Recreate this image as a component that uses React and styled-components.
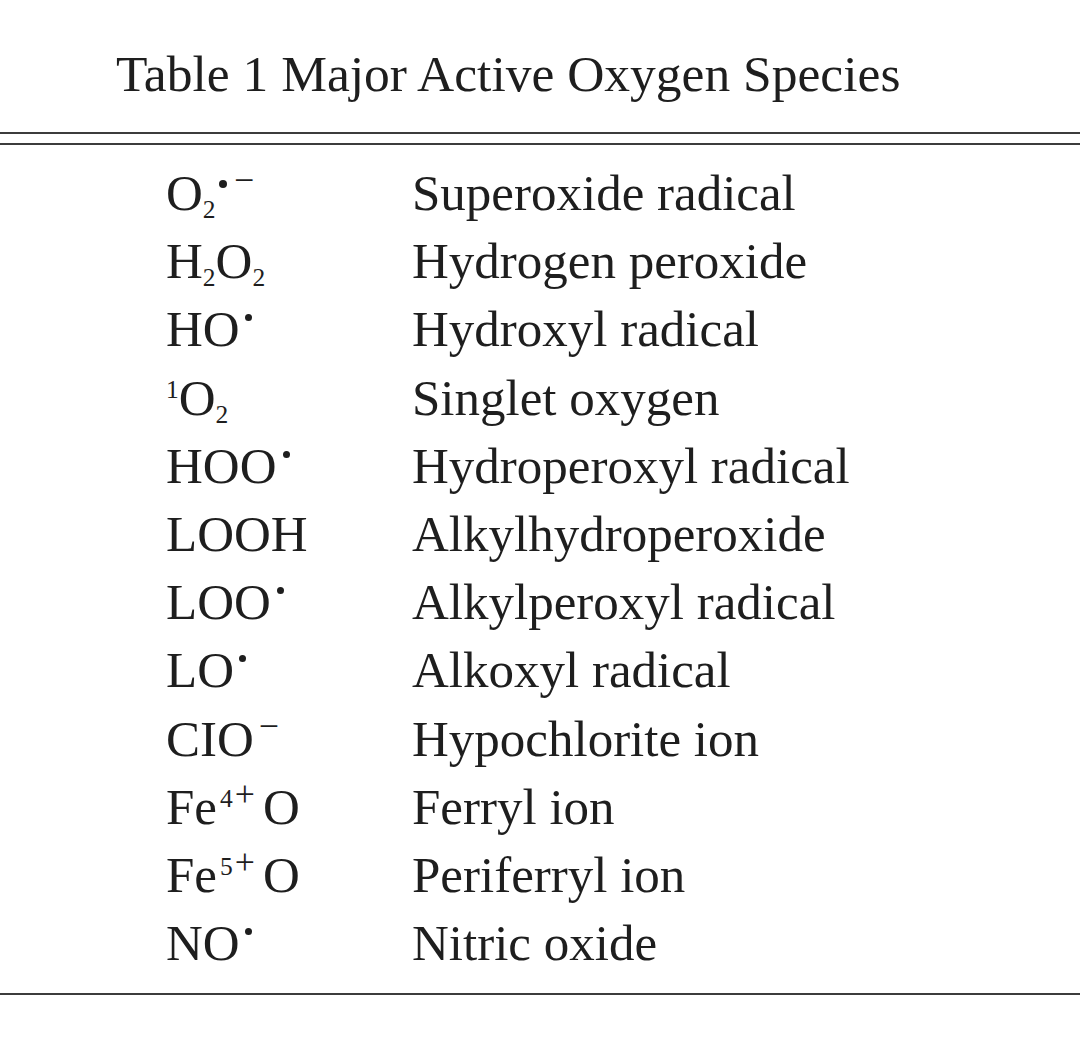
import React from "react";
import styled, { createGlobalStyle } from "styled-components";

const Global = createGlobalStyle`
  html, body { margin: 0; padding: 0; background: #ffffff; }
  body { font-family: "Liberation Serif", "Times New Roman", serif; color: #1e1e1e; }
`;

const Page = styled.div`
  width: 1080px;
  height: 1042px;
  background: #fff;
  padding-top: 43px;
  box-sizing: border-box;
`;

const Title = styled.h1`
  margin: 0 0 28px 116px;
  font-weight: 400;
  font-size: 51.5px;
  line-height: 61px;
  white-space: nowrap;
`;

const Rule = styled.div`
  height: 2px;
  background: #3c3c3c;
  margin-top: ${(p) => p.$gap || 0}px;
`;

const Body = styled.div`
  display: grid;
  grid-template-columns: 246px 1fr;
  padding: 14px 0 16px 166px;
  font-size: 51px;
  line-height: 68.2px;
`;

const Cell = styled.div`
  white-space: nowrap;
`;

const Sub = styled.span`
  font-size: 0.5em;
  line-height: 0;
  vertical-align: -0.32em;
`;

const SupNum = styled.span`
  font-size: 0.5em;
  line-height: 0;
  vertical-align: 0.66em;
  margin-left: ${(p) => p.$ml || 0}px;
`;

const SupSign = styled.span`
  font-size: 0.7em;
  line-height: 0;
  vertical-align: 0.5em;
  margin-left: ${(p) => p.$ml || 0}px;
  margin-right: ${(p) => p.$mr || 0}px;
`;

const Dot = styled.span`
  display: inline-block;
  width: ${(p) => p.$size || 7}px;
  height: ${(p) => p.$size || 7}px;
  border-radius: 50%;
  background: currentColor;
  vertical-align: ${(p) => p.$lift || 25}px;
  margin-left: ${(p) => p.$ml ?? 5.5}px;
`;

const rows = [
  [<>O<Sub>2</Sub><Dot $size={8} $lift={22.5} $ml={3.5} /><SupSign $ml={7}>−</SupSign></>, "Superoxide radical"],
  [<>H<Sub>2</Sub>O<Sub>2</Sub></>, "Hydrogen peroxide"],
  [<>HO<Dot /></>, "Hydroxyl radical"],
  [<><SupNum>1</SupNum>O<Sub>2</Sub></>, "Singlet oxygen"],
  [<>HOO<Dot $ml={6} /></>, "Hydroperoxyl radical"],
  [<>LOOH</>, "Alkylhydroperoxide"],
  [<>LOO<Dot $ml={6} /></>, "Alkylperoxyl radical"],
  [<>LO<Dot /></>, "Alkoxyl radical"],
  [<>CIO<SupSign $ml={5}>−</SupSign></>, "Hypochlorite ion"],
  [<>Fe<SupNum $ml={3}>4</SupNum><SupSign $ml={2} $mr={8}>+</SupSign>O</>, "Ferryl ion"],
  [<>Fe<SupNum $ml={3}>5</SupNum><SupSign $ml={2} $mr={8}>+</SupSign>O</>, "Periferryl ion"],
  [<>NO<Dot /></>, "Nitric oxide"],
];

export default function App() {
  return (
    <Page>
      <Global />
      <Title>Table 1 Major Active Oxygen Species</Title>
      <Rule />
      <Rule $gap={9} />
      <Body>
        {rows.map(([formula, name], i) => (
          <React.Fragment key={i}>
            <Cell>{formula}</Cell>
            <Cell>{name}</Cell>
          </React.Fragment>
        ))}
      </Body>
      <Rule />
    </Page>
  );
}
